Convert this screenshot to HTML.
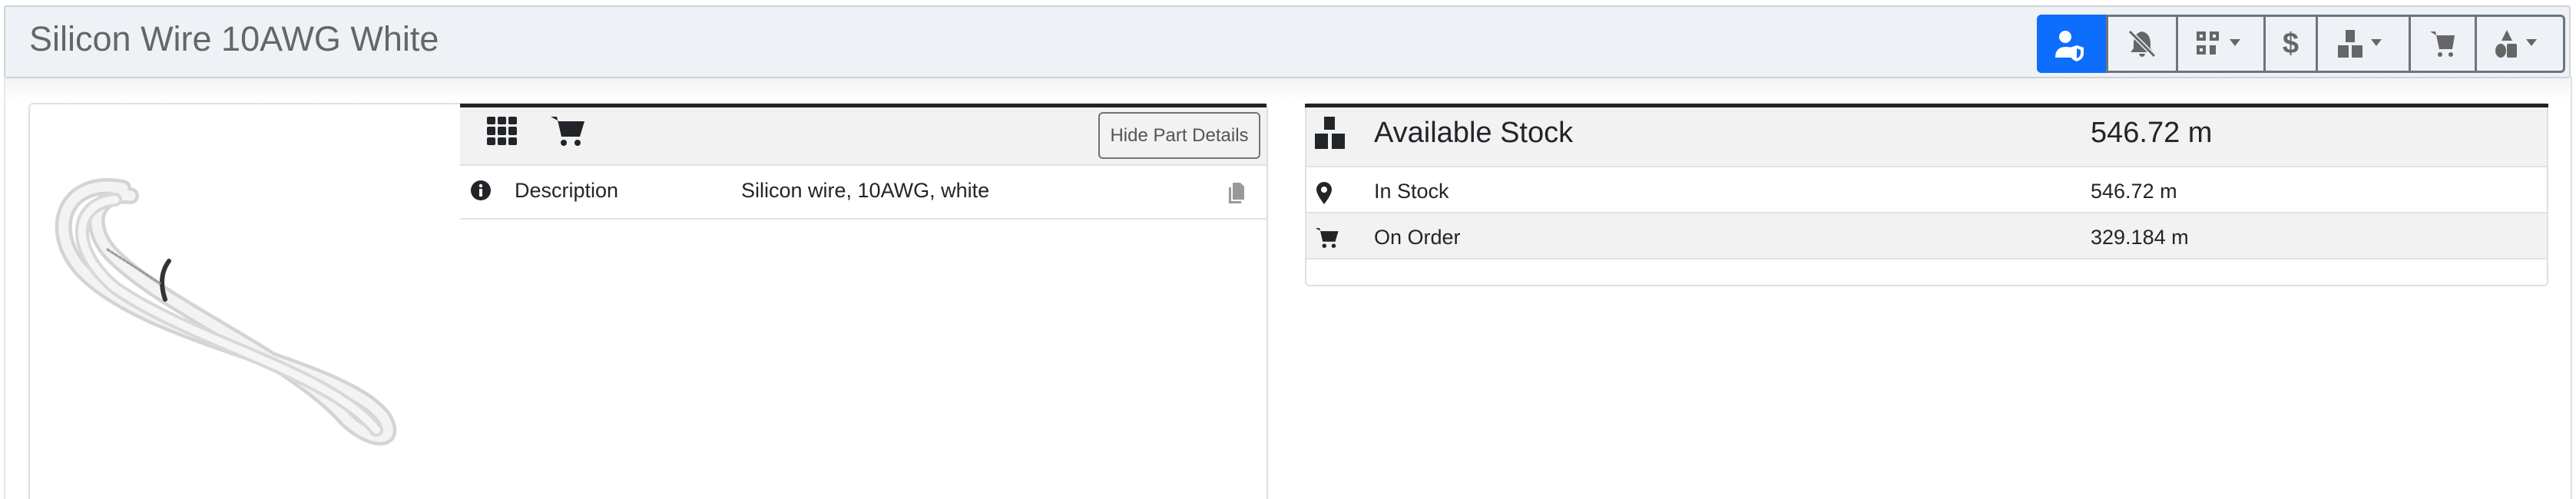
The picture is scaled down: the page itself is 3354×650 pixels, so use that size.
<!DOCTYPE html>
<html style="height:650px;overflow:hidden"><head><meta charset="utf-8"><style>
*{box-sizing:border-box;margin:0;padding:0}
body{width:3354px;height:650px;background:#fff;font-family:"Liberation Sans",sans-serif;color:#212529;position:relative;overflow:hidden}
.abs{position:absolute}
.hdr{left:5px;top:7px;width:3342px;height:95px;background:#eef2f6;border:2px solid #cfd3d6;border-radius:3px}
.title{left:38px;top:25px;font-size:45px;color:#666;white-space:nowrap}
.grp{top:19px;height:76px;border:3px solid #6c757d;border-left:none}
.btn{position:absolute;top:0;height:70px;border-left:3px solid #6c757d;display:flex;align-items:center;justify-content:center}
.card{border:2px solid #e0e0e0;border-radius:6px}
.txt{font-size:27px;white-space:nowrap}
</style></head><body>
<div class="abs hdr"></div>
<div class="abs title">Silicon Wire 10AWG White</div>
<div class="abs" style="left:2652px;top:19px;width:90px;height:76px;background:#0d6efd;border-radius:6px 0 0 6px">
<svg width="90" height="76" viewBox="0 0 90 76"><circle cx="37" cy="29" r="8" fill="#fff"/><path d="M24 56q0-14 14-14 7 0 10 3v11z" fill="#fff"/><path d="M52 40l9 3v7q0 8-9 11-9-3-9-11v-7z" fill="#fff"/><path d="M52 44l5 2v4q0 5-5 7z" fill="#0d6efd"/></svg></div>
<div class="abs grp" style="left:2742px;width:598px;border-radius:0 6px 6px 0">
<div class="btn" style="left:0;width:91px"><svg width="40" height="40" viewBox="0 0 40 40"><path d="M20 4q10 2 11 14v8l4 5H5l4-5v-8Q10 6 20 4z" fill="#666"/><path d="M16 33h8q-1 4-4 4t-4-4z" fill="#666"/><path d="M4 4l32 32" stroke="#eef2f6" stroke-width="6"/><path d="M4 4l32 32" stroke="#666" stroke-width="3"/></svg></div>
<div class="btn" style="left:91px;width:114px"><svg width="70" height="40" viewBox="0 0 70 40"><g fill="#666"><rect x="3" y="4" width="12" height="12"/><rect x="20" y="4" width="12" height="12"/><rect x="3" y="22" width="12" height="12"/><rect x="20" y="22" width="8" height="12"/></g><g fill="#eef2f6"><rect x="7" y="8" width="4" height="4"/><rect x="24" y="8" width="4" height="4"/><rect x="7" y="26" width="4" height="4"/></g><path d="M46 14h14l-7 9z" fill="#666"/></svg></div>
<div class="btn" style="left:205px;width:68px;font-size:38px;color:#666;font-weight:bold">$</div>
<div class="btn" style="left:273px;width:121px"><svg width="70" height="40" viewBox="0 0 70 40"><g fill="#666"><rect x="12" y="2" width="12" height="16"/><rect x="2" y="22" width="14" height="16"/><rect x="20" y="22" width="14" height="16"/></g><path d="M45 14h14l-7 9z" fill="#666"/></svg></div>
<div class="btn" style="left:394px;width:86px"><svg width="40" height="40" viewBox="0 0 40 40"><path d="M3 4h7l5 23h17l3-18H11z" fill="#666"/><circle cx="16" cy="34" r="3" fill="#666"/><circle cx="30" cy="34" r="3" fill="#666"/></svg></div>
<div class="btn" style="left:480px;width:115px;border-right:none"><svg width="70" height="40" viewBox="0 0 70 40"><path d="M18 2l7 14H11z" fill="#666"/><ellipse cx="10" cy="29" rx="7" ry="9" fill="#666"/><rect x="18" y="20" width="13" height="18" rx="2" fill="#666"/><path d="M43 14h14l-7 9z" fill="#666"/></svg></div>
</div>
<div class="abs" style="left:5px;top:102px;width:3342px;height:30px;background:linear-gradient(#f4f4f4,#fff)"></div>
<div class="abs" style="left:3347px;top:100px;width:2px;height:550px;background:#e0e0e0"></div>
<div class="abs" style="left:5px;top:100px;width:2px;height:550px;background:#e8e8e8"></div>

<div class="abs card" style="left:37px;top:134px;width:1614px;height:530px;border-bottom:none;border-radius:6px 6px 0 0;height:516px"></div>
<svg class="abs" style="left:50px;top:225px" width="520" height="365" viewBox="0 0 520 365">
<g fill="none" stroke-linecap="round">
<path d="M110 20C30 5 10 80 60 130C150 220 400 250 450 320C470 355 430 350 400 320C330 240 150 170 90 100C60 60 80 25 120 30" stroke="#d4d4d4" stroke-width="22"/>
<path d="M110 20C30 5 10 80 60 130C150 220 400 250 450 320C470 355 430 350 400 320C330 240 150 170 90 100C60 60 80 25 120 30" stroke="#f3f3f3" stroke-width="13"/>
<path d="M100 35C45 40 40 100 100 150C200 220 380 260 440 335" stroke="#d8d8d8" stroke-width="18"/>
<path d="M100 35C45 40 40 100 100 150C200 220 380 260 440 335" stroke="#f5f5f5" stroke-width="10"/>
<path d="M170 115q-15 20-5 50" stroke="#333" stroke-width="6"/>
<path d="M90 100l70 45" stroke="#999" stroke-width="3" stroke-dasharray="3 3"/>
</g></svg>

<div class="abs" style="left:599px;top:135px;width:1050px;height:5px;background:#212529"></div>
<div class="abs" style="left:599px;top:140px;width:1050px;height:76px;background:#f2f2f2;border-bottom:2px solid #dee2e6"></div>
<svg class="abs" style="left:634px;top:152px" width="42" height="38" viewBox="0 0 42 38"><g fill="#212529"><rect x="0" y="0" width="11" height="10" rx="2"/><rect x="14" y="0" width="11" height="10" rx="2"/><rect x="28" y="0" width="11" height="10" rx="2"/><rect x="0" y="13" width="11" height="11" rx="2"/><rect x="14" y="13" width="11" height="11" rx="2"/><rect x="28" y="13" width="11" height="11" rx="2"/><rect x="0" y="27" width="11" height="10" rx="2"/><rect x="14" y="27" width="11" height="10" rx="2"/><rect x="28" y="27" width="11" height="10" rx="2"/></g></svg>
<svg class="abs" style="left:716px;top:150px" width="50" height="42" viewBox="0 0 50 42"><path d="M1 2h8l6 26h24l6-20H12z" fill="#212529"/><circle cx="18" cy="36" r="4" fill="#212529"/><circle cx="36" cy="36" r="4" fill="#212529"/></svg>
<div class="abs" style="left:1430px;top:146px;width:211px;height:61px;border:2px solid #6c757d;border-radius:6px;font-size:24px;color:#555;display:flex;align-items:center;justify-content:center">Hide Part Details</div>
<div class="abs" style="left:599px;top:216px;width:1050px;height:70px;border-bottom:2px solid #dee2e6"></div>
<svg class="abs" style="left:612px;top:234px" width="28" height="28" viewBox="0 0 28 28"><circle cx="14" cy="14" r="13" fill="#212529"/><rect x="12" y="12" width="4" height="10" fill="#fff"/><circle cx="14" cy="8" r="2.2" fill="#fff"/></svg>
<div class="abs txt" style="left:670px;top:233px">Description</div>
<div class="abs txt" style="left:965px;top:233px">Silicon wire, 10AWG, white</div>
<svg class="abs" style="left:1598px;top:238px" width="24" height="28" viewBox="0 0 24 28"><path d="M7 0h10l5 5v17H7z" fill="#999"/><path d="M2 6h3v18h13v3H2z" fill="#999"/></svg>

<div class="abs card" style="left:1699px;top:134px;width:1619px;height:239px"></div>
<div class="abs" style="left:1699px;top:135px;width:1619px;height:5px;background:#212529"></div>
<div class="abs" style="left:1701px;top:140px;width:1615px;height:78px;background:#f2f2f2;border-bottom:2px solid #dee2e6"></div>
<svg class="abs" style="left:1712px;top:152px" width="42" height="42" viewBox="0 0 42 42"><g fill="#212529"><rect x="12" y="0" width="14" height="17"/><rect x="0" y="22" width="17" height="20"/><rect x="22" y="22" width="17" height="20"/></g></svg>
<div class="abs" style="left:1789px;top:152px;font-size:38px;white-space:nowrap">Available Stock</div>
<div class="abs" style="left:2722px;top:152px;font-size:38px;white-space:nowrap">546.72 m</div>
<div class="abs" style="left:1701px;top:218px;width:1615px;height:60px;border-bottom:2px solid #dee2e6"></div>
<svg class="abs" style="left:1713px;top:236px" width="22" height="30" viewBox="0 0 22 30"><path d="M11 1a10 10 0 0 1 10 10q0 6-10 19Q1 17 1 11A10 10 0 0 1 11 1z" fill="#212529"/><circle cx="11" cy="11" r="4" fill="#fff"/></svg>
<div class="abs txt" style="left:1789px;top:234px">In Stock</div>
<div class="abs txt" style="left:2722px;top:234px">546.72 m</div>
<div class="abs" style="left:1701px;top:278px;width:1615px;height:60px;background:#f2f2f2;border-bottom:2px solid #dee2e6"></div>
<svg class="abs" style="left:1712px;top:295px" width="34" height="30" viewBox="0 0 50 42"><path d="M1 2h8l6 26h24l6-20H12z" fill="#212529"/><circle cx="18" cy="36" r="4" fill="#212529"/><circle cx="36" cy="36" r="4" fill="#212529"/></svg>
<div class="abs txt" style="left:1789px;top:294px">On Order</div>
<div class="abs txt" style="left:2722px;top:294px">329.184 m</div>
</body></html>
